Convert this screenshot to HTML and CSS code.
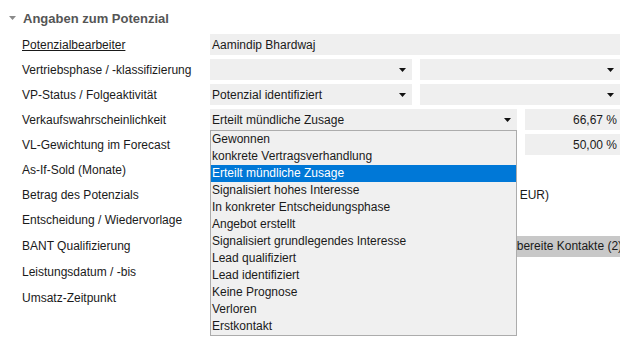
FILE: index.html
```html
<!DOCTYPE html>
<html lang="de">
  <head>
    <meta charset="UTF-8" />
    <title>Angaben zum Potenzial</title>
    <link rel="stylesheet" href="styles.css">
  </head>
  <body>
    <section class="panel">
      <div class="panel-head">
        <svg class="caret" width="7" height="4" viewBox="0 0 7 4"><polygon points="0,0 7,0 3.5,4" /></svg>
        <h2>Angaben zum Potenzial</h2>
      </div>

      <div class="form">
        <div class="row">
          <a class="label link">Potenzialbearbeiter</a>
          <div class="field">Aamindip Bhardwaj</div>
        </div>

        <div class="row">
          <span class="label">Vertriebsphase / -klassifizierung</span>
          <div class="pair half">
            <div class="field select"><span></span><svg class="arrow" width="7" height="4" viewBox="0 0 7 4"><polygon points="0,0 7,0 3.5,4" /></svg></div>
            <div class="field select"><span></span><svg class="arrow" width="7" height="4" viewBox="0 0 7 4"><polygon points="0,0 7,0 3.5,4" /></svg></div>
          </div>
        </div>

        <div class="row">
          <span class="label">VP-Status / Folgeaktivität</span>
          <div class="pair half">
            <div class="field select"><span>Potenzial identifiziert</span><svg class="arrow" width="7" height="4" viewBox="0 0 7 4"><polygon points="0,0 7,0 3.5,4" /></svg></div>
            <div class="field select"><span></span><svg class="arrow" width="7" height="4" viewBox="0 0 7 4"><polygon points="0,0 7,0 3.5,4" /></svg></div>
          </div>
        </div>

        <div class="row">
          <span class="label">Verkaufswahrscheinlichkeit</span>
          <div class="pair wide">
            <div class="dropdown">
              <div class="field select"><span>Erteilt mündliche Zusage</span><svg class="arrow" width="7" height="4" viewBox="0 0 7 4"><polygon points="0,0 7,0 3.5,4" /></svg></div>
              <ul class="options">
                <li>Gewonnen</li>
                <li>konkrete Vertragsverhandlung</li>
                <li class="selected">Erteilt mündliche Zusage</li>
                <li>Signalisiert hohes Interesse</li>
                <li>In konkreter Entscheidungsphase</li>
                <li>Angebot erstellt</li>
                <li>Signalisiert grundlegendes Interesse</li>
                <li>Lead qualifiziert</li>
                <li>Lead identifiziert</li>
                <li>Keine Prognose</li>
                <li>Verloren</li>
                <li>Erstkontakt</li>
              </ul>
            </div>
            <div class="field number">66,67 %</div>
          </div>
        </div>

        <div class="row">
          <span class="label">VL-Gewichtung im Forecast</span>
          <div class="pair wide">
            <div></div>
            <div class="field number">50,00 %</div>
          </div>
        </div>

        <div class="row">
          <span class="label">As-If-Sold (Monate)</span>
          <div></div>
        </div>

        <div class="row">
          <span class="label">Betrag des Potenzials</span>
          <div class="amount">12.250,00 EUR (gewichtet: 6.125 EUR)</div>
        </div>

        <div class="row tall">
          <span class="label">Entscheidung / Wiedervorlage</span>
          <div></div>
        </div>

        <div class="row tall">
          <span class="label">BANT Qualifizierung</span>
          <div class="chips">
            <span class="chip">Entscheidungsbereite Kontakte (2)</span>
          </div>
        </div>

        <div class="row tall">
          <span class="label">Leistungsdatum / -bis</span>
          <div></div>
        </div>

        <div class="row tall">
          <span class="label">Umsatz-Zeitpunkt</span>
          <div></div>
        </div>
      </div>
    </section>
  </body>
</html>
```

FILE: styles.css
```css
/* Base */
* {
  box-sizing: border-box;
  margin: 0;
  padding: 0;
}

html,
body {
  min-height: 340px;
}

body {
  font-family: "Liberation Sans", Arial, sans-serif;
  font-size: 12px;
  color: #1a1a1a;
  background: #fff;
}

/* Panel header */
.panel {
  padding-top: 8px;
  min-height: 340px;
}

.panel-head {
  display: flex;
  align-items: center;
  height: 20px;
  padding-left: 9px;
  gap: 7px;
}

.panel-head h2 {
  font-size: 13px;
  font-weight: bold;
  color: #555;
}

.caret {
  fill: #8a8a8a;
}

/* Form rows */
.form {
  display: flex;
  flex-direction: column;
  gap: 4px;
  padding-left: 22px;
  margin-top: 6px;
}

.row {
  display: grid;
  grid-template-columns: 188px 410px;
  align-items: center;
  height: 21px;
}

.row.tall {
  height: 22px;
}

.label {
  white-space: nowrap;
}

.link {
  text-decoration: underline;
  color: #1a1a1a;
}

.field {
  display: flex;
  align-items: center;
  height: 21px;
  padding: 0 2px;
  background-color: #efefef;
  white-space: nowrap;
}

.select {
  justify-content: space-between;
  padding-right: 6px;
}

.arrow {
  fill: #111;
  flex-shrink: 0;
}

.number {
  justify-content: flex-end;
  padding-right: 3px;
}

.pair {
  display: grid;
  gap: 8px;
}

.pair.half {
  grid-template-columns: 202px 200px;
}

.pair.wide {
  grid-template-columns: 307px 95px;
}

/* Open list */
.dropdown {
  position: relative;
}

.options {
  position: absolute;
  top: 21px;
  left: 0;
  width: 307px;
  list-style: none;
  background-color: #f0f0f0;
  border: 1px solid #acacac;
  z-index: 10;
}

.options li {
  height: 17px;
  line-height: 17px;
  padding-left: 1px;
  white-space: nowrap;
}

.options li.selected {
  background-color: #0078d7;
  color: #fff;
}

/* Lower rows */
.amount {
  width: 339px;
  text-align: right;
  white-space: nowrap;
  overflow: hidden;
}

.chips {
  display: flex;
  overflow: hidden;
  height: 22px;
  align-items: center;
}

.chip {
  flex-shrink: 0;
  margin-left: 224px;
  height: 21px;
  line-height: 21px;
  padding: 0 4px;
  background-color: #c8c8c8;
  white-space: nowrap;
}
```
